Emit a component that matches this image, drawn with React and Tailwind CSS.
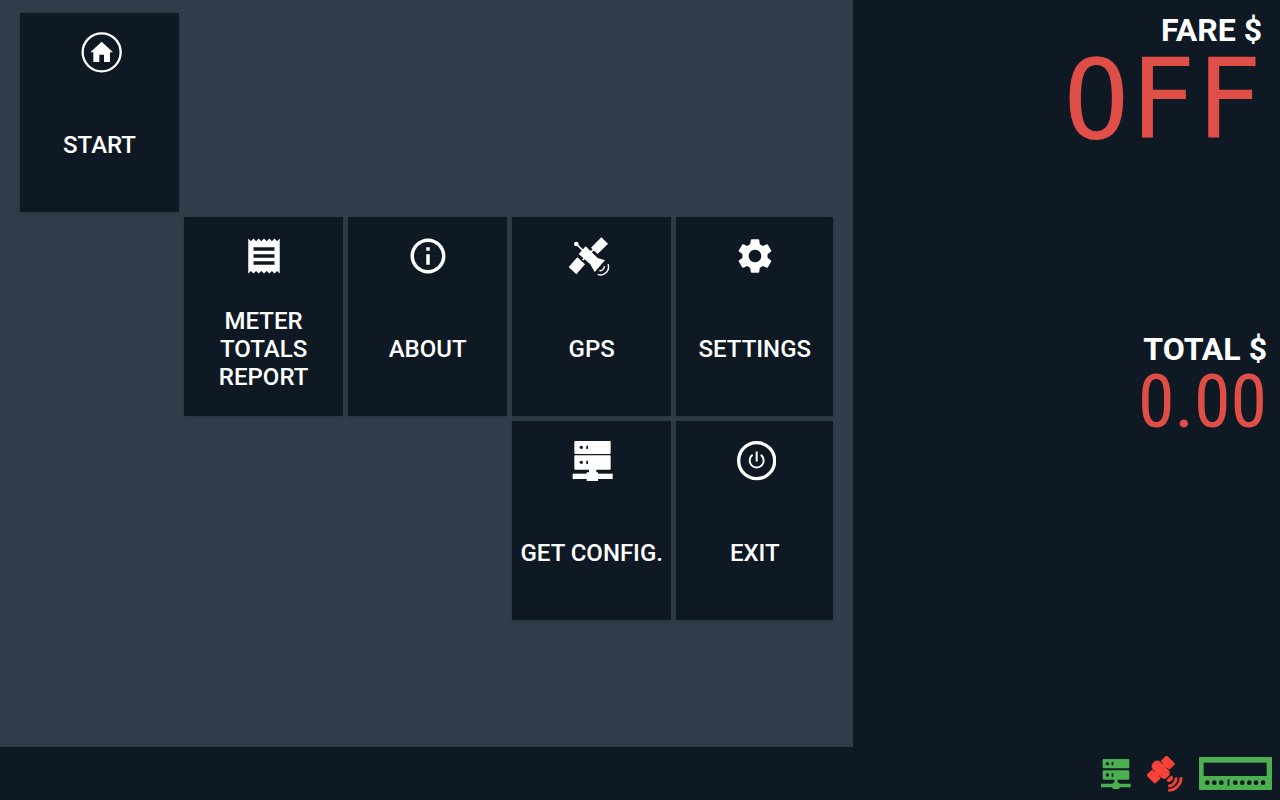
import React from 'react';
import { MdInfoOutline, MdReceipt, MdSettings } from 'react-icons/md';

function HomeIcon({ className }) {
  return (
    <svg viewBox="205 78 126 126" className={`${className} overflow-visible`} aria-hidden="true">
      <circle cx="273" cy="142" r="57" fill="none" stroke="currentColor" strokeWidth="7" />
      <path fill="currentColor" d="M273 110l34 32h-9v29h-18v-22h-14v22h-18v-29h-9z" />
    </svg>
  );
}

function SatelliteIcon({ className }) {
  return (
    <svg viewBox="31 15 126 126" className={`${className} overflow-visible`} aria-hidden="true">
      <g fill="currentColor">
        <circle cx="47" cy="42" r="7" />
        <path d="M122 22l20 19-31 31-20-19z" />
        <path d="M50 82l23 21-26 30-23-22z" />
        <path d="M75 49l36 35 22 7-31 35-13-23-35-31z" />
      </g>
      <g fill="none" stroke="currentColor" strokeWidth="5">
        <path d="M47 42l20 20M66 90l10-10M90 66l10-8" />
        <path strokeWidth="4" d="M131 108a13 13 0 0 1-15 14" />
        <path strokeWidth="4" d="M142 102a24 24 0 0 1-31 31" />
      </g>
    </svg>
  );
}

function ServerIcon({ className }) {
  return (
    <svg viewBox="196 72 126 126" className={`${className} overflow-visible`} aria-hidden="true">
      <g fill="currentColor">
        <rect x="206" y="78" width="109" height="39" rx="3" />
        <rect x="206" y="121" width="109" height="43" rx="3" />
        <rect x="201" y="176" width="120" height="16" />
        <path d="M250 163h22v9h5v26h-34v-26h7z" />
      </g>
      <g fill="#0f1923">
        <circle cx="227" cy="97" r="5" />
        <circle cx="227" cy="142" r="5" />
        <rect x="242" y="92" width="5" height="10" />
        <rect x="242" y="137" width="5" height="10" />
      </g>
    </svg>
  );
}

function PowerIcon({ className }) {
  return (
    <svg viewBox="686 72 126 126" className={className} aria-hidden="true">
      <g fill="none" stroke="currentColor">
        <circle cx="754" cy="137" r="54" strokeWidth="10" />
        <path strokeWidth="6" strokeLinecap="round" d="M754 112v25M740 121a21 21 0 1 0 28 0" />
      </g>
    </svg>
  );
}

function ServerStatusIcon() {
  return (
    <svg viewBox="45 54 90 90" className="size-[30px] text-[#4caf50]" role="img" aria-label="Server connected">
      <g fill="currentColor">
        <rect x="50" y="54" width="80" height="28" rx="4" />
        <rect x="50" y="88" width="80" height="28" rx="4" />
        <path d="M85 115h10v10h5v3h34v11h-32l-4 5h-16l-4-5h-33v-11h35v-3h5z" />
      </g>
      <g fill="#0f1923">
        <circle cx="64" cy="68" r="5" />
        <circle cx="64" cy="102" r="5" />
        <rect x="77" y="63" width="5" height="10" />
        <rect x="77" y="97" width="5" height="10" />
      </g>
    </svg>
  );
}

function GpsStatusIcon() {
  return (
    <svg viewBox="187 45 110 110" className="size-9 text-[#f44336]" role="img" aria-label="No GPS signal">
      <g fill="currentColor">
        <rect x="-13" y="-19" width="26" height="38" rx="4" transform="translate(251 65) rotate(-45)" />
        <rect x="-13" y="-19" width="26" height="38" rx="4" transform="translate(207 108) rotate(-45)" />
        <rect x="-16" y="-30" width="32" height="62" rx="13" transform="translate(228 86) rotate(-45)" />
        <rect x="-8" y="-36" width="16" height="72" transform="translate(229 87) rotate(45)" />
        <path d="M262 104l-16 16c6 6 12 5 17 0s5-10-1-16z" />
      </g>
      <g fill="none" stroke="currentColor" strokeWidth="9">
        <path d="M276 111a25 25 0 0 1-24 26" />
        <path d="M291 110a39 39 0 0 1-39 40" />
      </g>
    </svg>
  );
}

function MeterStatusIcon() {
  return (
    <svg viewBox="341 50 219 99" className="h-[33px] w-[73px] text-[#4caf50]" role="img" aria-label="Meter connected">
      <rect x="341" y="50" width="219" height="99" rx="2" fill="currentColor" />
      <g fill="#0f1923">
        <rect x="355" y="67" width="189" height="40" />
        <rect x="427" y="117" width="5" height="19" />
        {[366, 387, 408, 450, 471, 492, 512, 533].map((cx) => (
          <circle key={cx} cx={cx} cy="127" r="7" />
        ))}
      </g>
    </svg>
  );
}

const TILES = [
  { label: 'START', icon: HomeIcon, place: 'col-start-1 row-start-1' },
  { label: 'METER TOTALS REPORT', icon: MdReceipt, place: 'col-start-2 row-start-2' },
  { label: 'ABOUT', icon: MdInfoOutline, place: 'col-start-3 row-start-2' },
  { label: 'GPS', icon: SatelliteIcon, place: 'col-start-4 row-start-2' },
  { label: 'SETTINGS', icon: MdSettings, place: 'col-start-5 row-start-2' },
  { label: 'GET CONFIG.', icon: ServerIcon, place: 'col-start-4 row-start-3' },
  { label: 'EXIT', icon: PowerIcon, place: 'col-start-5 row-start-3' },
];

function Tile({ label, icon: Icon, place }) {
  return (
    <button
      type="button"
      className={`${place} flex flex-col items-center bg-[#0f1923] pt-[18px] shadow-sm hover:bg-[#15222e]`}
    >
      <Icon className="size-[42px] shrink-0" />
      <span className="flex flex-1 items-center px-1 pt-1 text-center text-2xl leading-7 font-medium">{label}</span>
    </button>
  );
}

function Readout({ label, value, className, valueClass }) {
  return (
    <section className={`text-right ${className}`}>
      <h2 className="text-[32px] leading-10 font-bold">{label}</h2>
      <p className={`text-[#df4f48] ${valueClass}`}>{value}</p>
    </section>
  );
}

export default function App() {
  return (
    <div className="flex min-h-screen flex-col bg-[#0f1923] font-[Roboto,sans-serif] text-white">
      <div className="flex flex-1">
        <main className="w-2/3 bg-[#2f3c49] px-5 pt-[13px]">
          <nav
            aria-label="Meter menu"
            className="grid auto-rows-[199px] grid-cols-[repeat(4,159fr)_157fr] gap-[5px]"
          >
            {TILES.map((tile) => (
              <Tile key={tile.label} {...tile} />
            ))}
          </nav>
        </main>

        <aside className="flex-1 pt-[10px]">
          <Readout
            label="FARE $"
            value="OFF"
            className="pr-[18px]"
            valueClass="font-['DejaVu_Sans_Mono',monospace] text-[110px] leading-[100px]"
          />
          <Readout
            label="TOTAL $"
            value="0.00"
            className="mt-[179px] pr-[13px]"
            valueClass="font-['Roboto_Condensed','Liberation_Sans_Narrow',sans-serif] text-[74px] leading-[66px]"
          />
        </aside>
      </div>

      <footer className="flex h-[53px] items-center justify-end gap-4 pr-2">
        <ServerStatusIcon />
        <GpsStatusIcon />
        <MeterStatusIcon />
      </footer>
    </div>
  );
}
